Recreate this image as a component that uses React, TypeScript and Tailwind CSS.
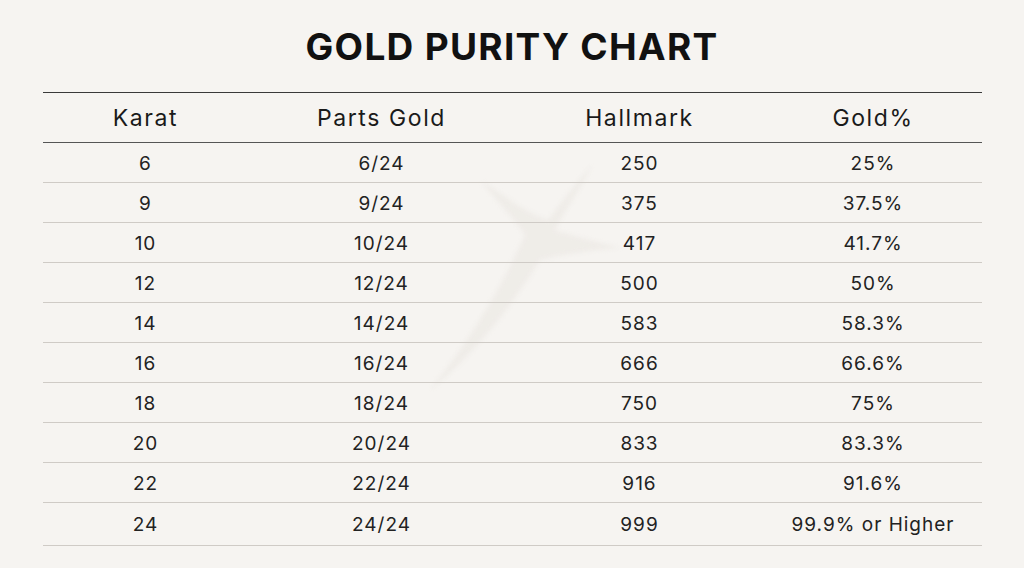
import React from "react";

const rows = [
  ["6", "6/24", "250", "25%"],
  ["9", "9/24", "375", "37.5%"],
  ["10", "10/24", "417", "41.7%"],
  ["12", "12/24", "500", "50%"],
  ["14", "14/24", "583", "58.3%"],
  ["16", "16/24", "666", "66.6%"],
  ["18", "18/24", "750", "75%"],
  ["20", "20/24", "833", "83.3%"],
  ["22", "22/24", "916", "91.6%"],
  ["24", "24/24", "999", "99.9% or Higher"],
];

const cols = "grid grid-cols-[206px_266px_250px_217px]";

export default function App() {
  return (
    <div
      className="relative w-[1024px] h-[568px] overflow-hidden bg-[#f6f4f1] text-[#1a1a1a]"
      style={{ fontFamily: "Inter, 'Noto Sans', sans-serif" }}
    >
      <svg
        className="absolute left-[420px] top-[160px] blur-[2px]"
        width="200"
        height="235"
        viewBox="0 0 200 235"
      >
        <path
          d="M172 5 C150 30 140 45 128 60 C100 50 85 35 62 22 C80 45 95 60 105 75 C80 130 50 180 10 230 C60 190 95 140 120 100 C140 95 170 90 200 88 C170 80 150 75 135 70 C145 50 160 30 172 5 Z"
          fill="#ebe7e2"
          opacity="0.6"
        />
      </svg>
      <div className="relative flex flex-col items-center">
        <h1 className="mt-[27px] text-[37px] leading-[40px] font-bold tracking-[1.3px] text-[#111]">
          GOLD PURITY CHART
        </h1>
        <div className="mt-[25px] w-[939px] border-t border-[#3a3a3a]">
          <div className={`${cols} h-[50px] items-center border-b border-[#555] pt-[1px] text-[23px] tracking-[1.6px] text-[#1a1a1a]`}>
            <div className="text-center">Karat</div>
            <div className="text-center">Parts Gold</div>
            <div className="text-center">Hallmark</div>
            <div className="text-center">Gold%</div>
          </div>
          {rows.map((r, i) => (
            <div
              key={i}
              className={`${cols} ${i === rows.length - 1 ? "h-[43px]" : "h-[40px]"} items-center border-b border-[#cfcbc6] pt-[3px] text-[19px] tracking-[1px] text-[#222]`}
            >
              {r.map((c, j) => (
                <div key={j} className="text-center">
                  {c}
                </div>
              ))}
            </div>
          ))}
        </div>
      </div>
    </div>
  );
}
